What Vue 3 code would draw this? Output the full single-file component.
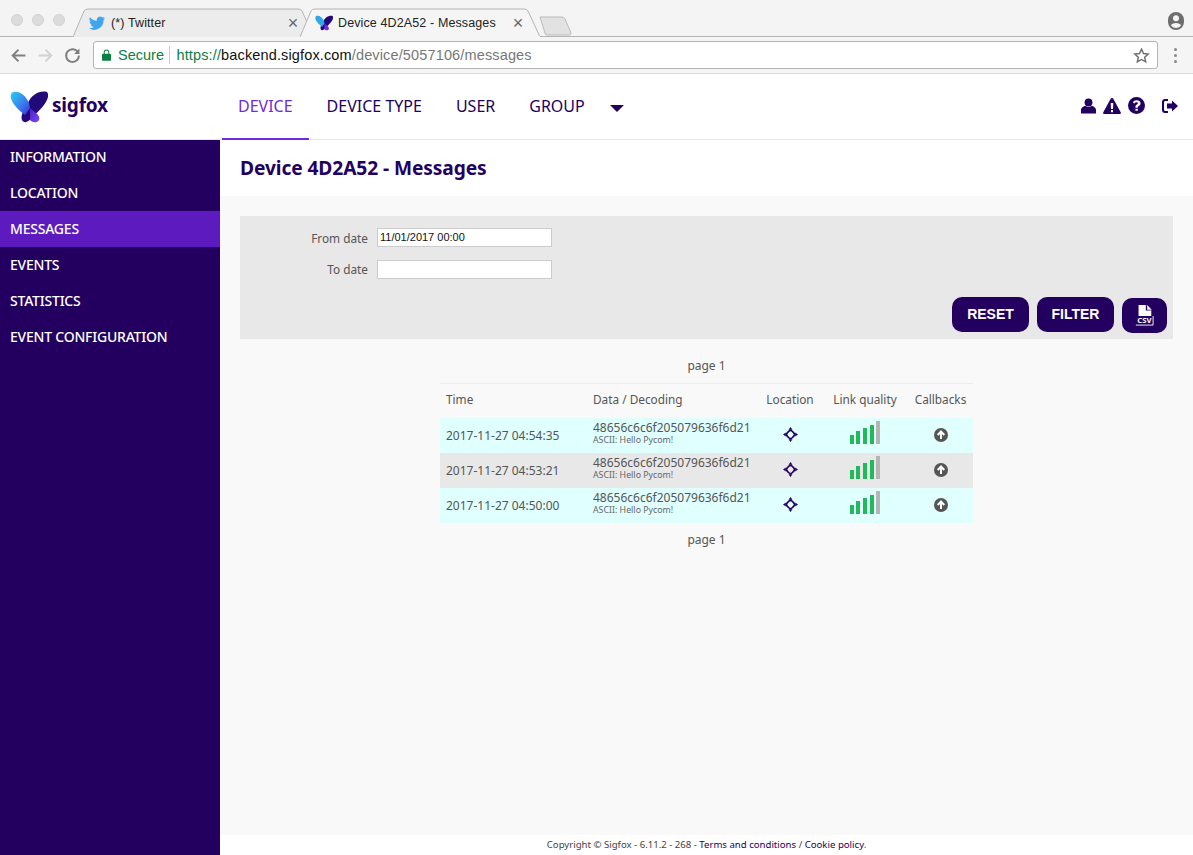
<script setup>
const sideItems = ['INFORMATION', 'LOCATION', 'MESSAGES', 'EVENTS', 'STATISTICS', 'EVENT CONFIGURATION']
const navItems = ['DEVICE', 'DEVICE TYPE', 'USER', 'GROUP']
const rows = [
  { time: '2017-11-27 04:54:35', alt: false },
  { time: '2017-11-27 04:53:21', alt: true },
  { time: '2017-11-27 04:50:00', alt: false },
]
const bars = [9, 13, 16, 19]
</script>

<template>
  <div class="page">
    <div class="tabstrip">
      <div class="lights"><i></i><i></i><i></i></div>
      <div class="tab tab-bg">
        <svg class="tabshape" viewBox="0 0 242 29" preserveAspectRatio="none"><path d="M0 29 L11 3 Q12 1 15 1 H225 Q228 1 229 3 L241 29" fill="#ececec" stroke="#b4b4b4"/></svg>
        <svg class="fav" viewBox="0 0 24 22"><path fill="#3fa5ee" d="M23 4.300c-.8.4-1.700.6-2.600.7 1-.6 1.700-1.500 2-2.500-.9.5-1.900.9-2.900 1.100A4.600 4.600 0 0 0 11.700 7.800 13 13 0 0 1 2.300 3a4.600 4.600 0 0 0 1.400 6.100c-.7 0-1.400-.2-2-.6 0 2.200 1.600 4.100 3.700 4.600-.7.2-1.400.2-2.100.1.600 1.800 2.300 3.100 4.300 3.200A9.200 9.200 0 0 1 1 18.300 13 13 0 0 0 21 6.700c.8-.6 1.500-1.400 2-2.400z"/></svg>
        <span class="tabtext">(*) Twitter</span>
        <span class="tabx">×</span>
      </div>
      <div class="tab tab-on">
        <svg class="tabshape" viewBox="0 0 242 29" preserveAspectRatio="none"><path d="M0 29 L11 3 Q12 1 15 1 H225 Q228 1 229 3 L241 29" fill="#f5f5f5" stroke="#b4b4b4"/></svg>
        <svg class="fav" viewBox="0 0 38 32">
          <path fill="#23087a" d="M37 1C30-1 21 4 18 12 15 18 10 24 12 29c2 4 7 2 10-3C30 20 42 7 37 1z"/>
          <path fill="#2fa8e8" d="M2 1.500C8-1 15 3 19 12l1 5-5 7C8 19-3 8 2 1.500z"/>
          <path fill="#6a2de0" d="M20 17c4 4 11 7 9 12-2 4-8 2-9 0z"/>
        </svg>
        <span class="tabtext">Device 4D2A52 - Messages</span>
        <span class="tabx">×</span>
      </div>
      <svg class="newtab" viewBox="0 0 33 20"><path d="M1 1 H23 Q25 1 26 3 L32 17 Q32 19 30 19 H8 Q6 19 6 17 Z" fill="#e2e2e2" stroke="#b9b9b9"/></svg>
      <svg class="profile" viewBox="0 0 16 18"><path fill="#6e6e6e" fill-rule="evenodd" d="M8 0a8 8 0 0 1 8 8v2a8 8 0 0 1-16 0V8a8 8 0 0 1 8-8zm0 3.300a3 3 0 1 0 0 6 3 3 0 0 0 0-6zM8 11c-2.600 0-4.700 1-5 2.300C4 15 6 16 8 16s4-1 5-2.700C12.700 12 10.600 11 8 11z"/></svg>
    </div>

    <div class="toolbar">
      <svg class="tool" viewBox="0 0 16 16"><path d="M14.500 8H2.500M8 2.500 2.500 8 8 13.500" fill="none" stroke="#808080" stroke-width="1.800"/></svg>
      <svg class="tool tool2" viewBox="0 0 16 16"><path d="M1.500 8h12M8 2.500 13.500 8 8 13.500" fill="none" stroke="#d2d2d2" stroke-width="1.800"/></svg>
      <svg class="tool" viewBox="0 0 16 16"><path d="M13.300 5.300A6 6 0 1 0 14 8" fill="none" stroke="#808080" stroke-width="1.800"/><path d="M14.500 1.500v5h-5z" fill="#808080"/></svg>
      <div class="omnibox">
        <svg class="lock" viewBox="0 0 10 13"><path fill="#0b8043" d="M1 5h1V3.500a3 3 0 0 1 6 0V5h1a1 1 0 0 1 1 1v6a1 1 0 0 1-1 1H1a1 1 0 0 1-1-1V6a1 1 0 0 1 1-1zm2 0h4V3.500a2 2 0 0 0-4 0z"/></svg>
        <span class="secure">Secure</span>
        <span class="sep"></span>
        <span class="url"><span class="https">https://</span><span class="host">backend.sigfox.com</span><span class="rest">/device/5057106/messages</span></span>
        <svg class="star" viewBox="0 0 24 24"><path d="M12 3l2.800 6.200 6.700.7-5 4.500 1.400 6.600L12 17.600 6.100 21l1.400-6.600-5-4.500 6.700-.7z" fill="none" stroke="#6e6e6e" stroke-width="2"/></svg>
      </div>
      <div class="dots"><i></i><i></i><i></i></div>
    </div>

    <header class="apphead">
      <div class="brand">
        <svg class="logo" viewBox="0 0 38 32">
          <defs>
            <linearGradient id="w1" x1="0" y1="0" x2="1" y2="1"><stop offset="0" stop-color="#28d0f0"/><stop offset=".6" stop-color="#3a78ee"/><stop offset="1" stop-color="#3a2bd0"/></linearGradient>
            <linearGradient id="w2" x1="0" y1="0" x2="1" y2="1"><stop offset="0" stop-color="#4a20c8"/><stop offset="1" stop-color="#7a48f5"/></linearGradient>
          </defs>
          <path fill="#23087a" d="M37 1C30-1 21 4 18 12 15 18 10 24 12 29c2 4 7 2 10-3C30 20 42 7 37 1z"/>
          <path fill="url(#w1)" d="M2 1.500C8-1 15 3 19 12l1 5-5 7C8 19-3 8 2 1.500z"/>
          <path fill="url(#w2)" d="M20 17c4 4 11 7 9 12-2 4-8 2-9 0z"/>
        </svg>
        <span class="wordmark">sigfox</span>
      </div>
      <nav class="nav">
        <a v-for="(n, i) in navItems" :key="n" class="navitem" :class="{ on: i === 0 }">{{ n }}</a>
        <span class="caret"></span>
      </nav>
      <div class="headicons">
        <svg viewBox="0 0 16 16" class="hi user"><circle cx="8" cy="4.200" r="4.200"/><path d="M0 16v-3.500C0 10 2.500 8 5 8c1 .8 2 1.100 3 1.100s2-.3 3-1.100c2.500 0 5 2 5 4.500V16z"/></svg>
        <svg viewBox="0 0 18 16" class="hi tri"><path fill-rule="evenodd" d="M9 0c.6 0 1 .3 1.300.8l7.400 13.400c.5 1-.1 1.800-1.100 1.800H1.400c-1 0-1.600-.8-1.100-1.800L7.700.8C8 .3 8.400 0 9 0zM7.700 5l.3 6h2l.3-6zM8 12v2.200h2V12z"/></svg>
        <svg viewBox="0 0 16 16" class="hi q"><path fill-rule="evenodd" d="M8 0a8 8 0 1 1 0 16A8 8 0 0 1 8 0zM7 11v2h2.200v-2zM8.200 3C6.400 3 5.200 3.800 4.600 5.200l1.500 1c.4-.8.900-1.300 1.900-1.300.8 0 1.300.4 1.300 1 0 .5-.4.800-1 1.200C7.500 7.600 7 8.200 7 9.400V10h2.200c0-.8.300-1.100 1-1.500 1-.6 1.600-1.300 1.600-2.600C11.800 4.100 10.200 3 8.200 3z"/></svg>
        <svg viewBox="0 0 16 14" class="hi out"><path d="M6 0v2H3.500C2.700 2 2 2.700 2 3.500v7c0 .8.700 1.500 1.500 1.500H6v2H3C1.300 14 0 12.700 0 11V3c0-1.700 1.300-3 3-3z"/><path d="M10 1.500 16 7l-6 5.500V9.500H5v-5h5z"/></svg>
      </div>
    </header>

    <div class="body">
      <aside class="side">
        <a v-for="s in sideItems" :key="s" class="sideitem" :class="{ on: s === 'MESSAGES' }">{{ s }}</a>
      </aside>
      <main class="main">
        <div class="titlebar"><h1>Device 4D2A52 - Messages</h1></div>
        <div class="content">
          <form class="filter" @submit.prevent>
            <div class="field"><label>From date</label><input value="11/01/2017 00:00" /></div>
            <div class="field"><label>To date</label><input /></div>
            <div class="actions">
              <button class="btn">RESET</button>
              <button class="btn">FILTER</button>
              <button class="btn csv">
                <svg viewBox="0 0 22 24" width="20" height="22">
                  <path fill="#fff" d="M5 0h8l6 6v6H5z"/>
                  <path fill="#23005f" d="M13 0l6 6h-6z"/><path fill="#fff" d="M14.500 0l5 5h-5z"/>
                  <path d="M21 12v10H2" fill="none" stroke="#fff" stroke-width="1"/>
                  <text x="11.500" y="20" text-anchor="middle" font-size="8.500" font-weight="700" fill="#fff" font-family="Noto Sans, sans-serif">CSV</text>
                </svg>
              </button>
            </div>
          </form>
          <div class="pager first">page 1</div>
          <table class="msgs">
            <colgroup><col class="c1" /><col class="c2" /><col class="c3" /><col class="c4" /><col class="c5" /></colgroup>
            <thead>
              <tr><th>Time</th><th>Data / Decoding</th><th class="ctr">Location</th><th class="ctr lq">Link quality</th><th class="ctr cb">Callbacks</th></tr>
            </thead>
            <tbody>
              <tr v-for="r in rows" :key="r.time" :class="r.alt ? 'alt' : 'cy'">
                <td>{{ r.time }}</td>
                <td class="data"><div class="hex">48656c6c6f205079636f6d21</div><div class="ascii">ASCII: Hello Pycom!</div></td>
                <td class="ctr ico">
                  <svg class="loc" viewBox="0 0 15 15"><rect x="4" y="4" width="7" height="7" rx="2.400" transform="rotate(45 7.500 7.500)" fill="none" stroke="#23005f" stroke-width="1.700"/><path d="M7.500 0l2 2.800h-4zM7.500 15l2-2.800h-4zM0 7.500l2.800-2v4zM15 7.500l-2.800-2v4z" fill="#23005f"/></svg>
                </td>
                <td class="ctr sig">
                  <span class="signal">
                    <i v-for="(b, k) in bars" :key="k" class="bar" :style="{ height: b + 'px' }"></i>
                    <i class="bar off"></i>
                  </span>
                </td>
                <td class="ctr ico cb">
                  <svg class="up" viewBox="0 0 14 14"><circle cx="7" cy="7" r="7" fill="#555"/><path d="M7 11V4M3.700 7 7 3.500 10.300 7" fill="none" stroke="#fff" stroke-width="2"/></svg>
                </td>
              </tr>
            </tbody>
          </table>
          <div class="pager">page 1</div>
        </div>
        <footer class="foot">Copyright © Sigfox - 6.11.2 - 268 - <a>Terms and conditions</a> / <a>Cookie policy</a>.</footer>
      </main>
    </div>
  </div>
</template>

<style>
html, body { margin: 0; height: 100%; overflow: hidden; background: #fff; }
</style>

<style scoped>
.page { width: 1193px; height: 855px; display: flex; flex-direction: column; font-family: "Noto Sans", "Open Sans", sans-serif; color: #555; overflow: hidden; }

.tabstrip { height: 37px; flex: none; box-sizing: border-box; background: #f4f4f4; border-bottom: 1px solid #b4b4b4; display: flex; align-items: flex-end; position: relative; }
.lights { display: flex; gap: 9px; width: 73px; box-sizing: border-box; padding-left: 11px; align-self: flex-start; margin-top: 14px; }
.lights i { width: 12px; height: 12px; border-radius: 50%; background: #dcdcdc; border: 1px solid #d2d2d2; box-sizing: border-box; }
.tab { position: relative; height: 29px; width: 242px; margin-bottom: -1px; display: flex; align-items: center; padding: 0 11px 0 15px; box-sizing: border-box; font: 12.500px "Liberation Sans", Arial, sans-serif; color: #222; }
.tab-on { width: 241px; margin-left: -15px; padding: 0 12px 0 15px; }
.tabshape { position: absolute; inset: 0; width: 100%; height: 100%; }
.tab-on::after { content: ""; position: absolute; left: 1px; right: 1px; bottom: 0; height: 1px; background: #f5f5f5; }
.fav { position: relative; width: 18px; height: 16px; flex: none; margin-right: 5px; }
.tabtext { position: relative; flex: 1; white-space: nowrap; letter-spacing: .12px; }
.tabx { position: relative; font-size: 18px; color: #666; width: 14px; text-align: center; margin-right: 4px; line-height: 14px; }
.newtab { width: 33px; height: 20px; flex: none; margin: 0 0 0 -2px; align-self: flex-end; }
.profile { position: absolute; right: 9px; top: 12px; width: 16px; height: 18px; }

.toolbar { height: 37px; flex: none; box-sizing: border-box; background: #f5f5f5; border-bottom: 1px solid #dcdcdc; display: flex; align-items: center; padding-left: 10px; }
.tool { width: 17px; height: 17px; margin-right: 10px; flex: none; }
.tool2 { margin-right: 10px; }
.omnibox { width: 1065px; height: 28px; box-sizing: border-box; background: #fff; border: 1px solid #b4b4b4; border-radius: 3px; display: flex; align-items: center; padding: 0 7px 0 8px; font: 14.500px "Liberation Sans", Arial, sans-serif; margin-left: 2px; }
.lock { width: 9px; height: 12px; flex: none; margin-right: 7px; }
.secure { color: #0b8043; }
.sep { width: 1px; height: 18px; background: #c8c8c8; margin: 0 6px 0 5.500px; }
.url { flex: 1; white-space: nowrap; letter-spacing: .14px; }
.https { color: #0b8043; }
.host { color: #111; }
.rest { color: #777; }
.star { width: 17px; height: 17px; }
.dots { display: flex; flex-direction: column; gap: 3px; margin-left: 16px; }
.dots i { width: 3px; height: 3px; border-radius: 50%; background: #888; }

.apphead { height: 66px; flex: none; box-sizing: border-box; background: #fff; border-bottom: 1px solid #e8e4ee; display: flex; align-items: stretch; position: relative; }
.brand { width: 222px; flex: none; display: flex; align-items: center; box-sizing: border-box; padding: 0 0 3px 10px; }
.logo { width: 38px; height: 32px; flex: none; margin-top: 3px; }
.wordmark { font-size: 19px; font-weight: 700; color: #23005f; margin-left: 4px; letter-spacing: -.2px; }
.nav { display: flex; align-items: stretch; flex: 1; }
.navitem { padding: 0 17px; display: flex; align-items: center; font-size: 16px; color: #23005f; margin-bottom: -1px; border-bottom: 2px solid transparent; box-sizing: border-box; }
.navitem.on { color: #6f2bdc; border-bottom-color: #6f2bdc; padding: 0 16px; margin-right: 1px; }
.caret { align-self: center; width: 0; height: 0; border: 7px solid transparent; border-top: 7px solid #23005f; border-bottom: 0; margin: 4px 0 0 8px; }
.headicons { display: flex; align-items: center; padding-right: 15px; padding-bottom: 2px; }
.hi { width: 16px; height: 16px; fill: #23005f; display: block; }
.user { width: 15px; margin-right: 7px; }
.tri { width: 18px; margin-right: 7px; }
.q { width: 17px; height: 17px; margin-right: 17px; }
.out { width: 16px; height: 14px; }

.body { flex: 1; display: flex; min-height: 0; }
.side { width: 220px; flex: none; background: #23005f; display: flex; flex-direction: column; }
.sideitem { height: 36px; box-sizing: border-box; padding-bottom: 2px; display: flex; align-items: center; padding-left: 10px; color: #fff; font-size: 14px; font-weight: 500; letter-spacing: -.22px; }
.sideitem:first-child { height: 35px; }
.sideitem.on { background: #5d1bbf; }
.main { flex: 1; min-width: 0; display: flex; flex-direction: column; background: #f9f9f9; }
.titlebar { height: 56px; flex: none; background: #fff; display: flex; align-items: center; padding-left: 20px; }
h1 { margin: 0 0 1px; font-size: 19.200px; font-weight: 700; color: #23005f; letter-spacing: -.1px; }
.content { flex: 1; padding: 20px 20px 0; display: flex; flex-direction: column; min-height: 0; }
.filter { background: #e8e8e8; height: 123px; flex: none; box-sizing: border-box; padding-top: 11px; display: flex; flex-direction: column; }
.field { display: flex; align-items: center; height: 20px; margin-bottom: 12px; }
.field label { width: 128px; text-align: right; font-size: 11.800px; color: #555; margin-right: 9px; }
.field:first-child label { padding-top: 1px; }
.field input { width: 175px; height: 19px; box-sizing: border-box; border: 1px solid #ccc; background: #fff; padding: 0 2px; font: 11px "Liberation Sans", Arial, sans-serif; color: #111; outline: none; border-radius: 0; margin: 0; }
.actions { margin-top: auto; display: flex; justify-content: flex-end; gap: 8px; padding: 0 6px 6px 0; align-items: flex-end; }
.btn { width: 77px; height: 35px; border: 0; border-radius: 10px; background: #23005f; color: #fff; font: 700 14px "Liberation Sans", Arial, sans-serif; margin: 0 0 1px; display: flex; align-items: center; justify-content: center; padding: 0 0 2px; box-sizing: border-box; }
.csv { width: 45px; margin: 0; height: 35px; padding: 1px 2px 0 0; }
.pager { text-align: center; font-size: 12px; color: #555; height: 17px; line-height: 17px; margin-top: 8px; }
.first { margin-top: 18px; margin-bottom: 9px; }
.msgs { width: 533px; margin: 0 auto; border-collapse: collapse; table-layout: fixed; font-size: 12px; color: #555; flex: none; border-top: 1px solid #eeeeee; }
.c1 { width: 147px; } .c2 { width: 170px; } .c3 { width: 66px; } .c4 { width: 82px; } .c5 { width: 68px; }
.msgs th { height: 34px; padding: 0 6px 3px; font-weight: 400; text-align: left; white-space: nowrap; font-size: 11.800px; box-sizing: border-box; }
.msgs th.ctr { text-align: center; padding: 0 0 3px; }
.msgs th.lq { padding-left: 2px; }
.msgs th.cb { padding-left: 3px; }
.msgs td { height: 35px; padding: 0 6px; white-space: nowrap; box-sizing: border-box; }
.msgs td.ctr { text-align: center; padding: 0; }
.msgs td.ico { padding-bottom: 1px; }
.msgs td.cb { padding-left: 3px; }
.msgs td.sig { padding: 0 0 6px 2px; }
.cy td { background: #e0ffff; }
.alt td { background: #e8e8e8; }
.msgs td.data { line-height: 1; padding-bottom: 4px; }
.hex { font-size: 12px; line-height: 14px; }
.ascii { font-size: 8.800px; line-height: 11px; color: #666; }
.loc { width: 15px; height: 15px; display: block; margin: 0 auto; }
.signal { display: inline-flex; align-items: flex-end; gap: 2.600px; height: 23px; vertical-align: middle; }
.bar { width: 4px; background: #21b95c; display: block; }
.bar.off { height: 23px; background: #b5b5b5; }
.up { width: 14px; height: 14px; display: block; margin: 0 auto; }
.foot { height: 20px; flex: none; box-sizing: border-box; padding-bottom: 1px; background: #fff; text-align: center; font-size: 9.600px; line-height: 19px; color: #444; }
.foot a { color: #23005f; }
</style>
